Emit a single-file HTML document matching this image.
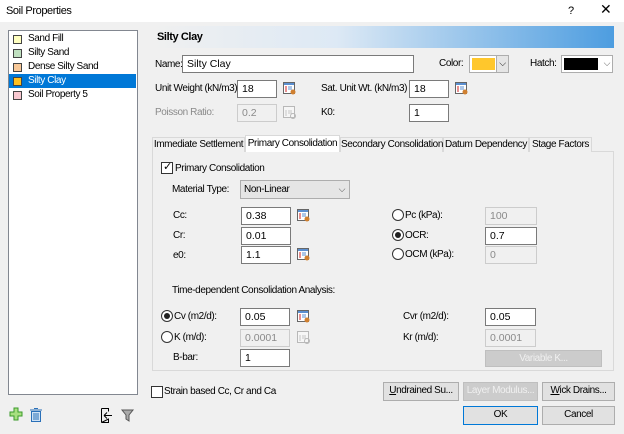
<!DOCTYPE html>
<html><head><style>
*{box-sizing:border-box;margin:0;padding:0}
body{width:624px;height:434px;background:#f0f0f0;font-family:"Liberation Sans",sans-serif;font-size:10px;letter-spacing:-0.4px;color:#000;position:relative;overflow:hidden}
.a{position:absolute;white-space:nowrap}
.t{position:absolute;white-space:nowrap;line-height:12px}
.in{position:absolute;background:#fff;border:1px solid #7a7a7a;padding:2px 4px;line-height:12px;font-size:10.5px;letter-spacing:0}
.dis{background:#f0f0f0;border-color:#ccc;color:#8a8a8a}
.g{color:#8a8a8a}
.btn{position:absolute;background:#e1e1e1;border:1px solid #adadad;text-align:center;line-height:16px;font-size:10px;white-space:nowrap;overflow:hidden}
.rad{position:absolute;width:12px;height:12px;border:1px solid #333;border-radius:50%;background:#fff}
.rad.on::after{content:"";position:absolute;left:2px;top:2px;width:6px;height:6px;border-radius:50%;background:#222}
.cb{position:absolute;width:12px;height:12px;border:1px solid #333;background:#fff}
.tab{position:absolute;top:137px;height:15px;border:1px solid #d9d9d9;border-bottom:none;background:#f0f0f0;line-height:13px;text-align:center;white-space:nowrap}
.li{position:absolute;left:9px;width:127px;height:14px;line-height:14px;padding-left:19px}
.sw{position:absolute;left:4px;top:3px;width:9px;height:9px;border:1px solid #444}
</style></head><body>
<div class="a" style="left:0;top:0;width:624px;height:22px;background:#fff"></div>
<div class="t" style="left:6px;top:5px;font-size:11px">Soil Properties</div>
<div class="t" style="left:568px;top:5px;font-size:11px">?</div>
<div class="t" style="left:600px;top:3px;font-size:14px">✕</div>

<div class="a" style="left:8px;top:30px;width:130px;height:365px;background:#fff;border:1px solid #828790"></div>
<div class="li" style="top:32px"><span class="sw" style="background:#ffffc0"></span>Sand Fill</div>
<div class="li" style="top:46px"><span class="sw" style="background:#c0e0c0"></span>Silty Sand</div>
<div class="li" style="top:60px"><span class="sw" style="background:#f8c898"></span>Dense Silty Sand</div>
<div class="li" style="top:74px;background:#0078d7;color:#fff"><span class="sw" style="background:#ffc020"></span>Silty Clay</div>
<div class="li" style="top:88px"><span class="sw" style="background:#f8c8d0"></span>Soil Property 5</div>

<div class="a" style="left:152px;top:26px;width:462px;height:22px;background:linear-gradient(90deg,#f0f0f0 0%,#dde9f5 40%,#4d9de0 100%)"></div>
<div class="t" style="left:157px;top:31px;font-weight:bold;font-size:11px">Silty Clay</div>

<div class="t" style="left:155px;top:59px">Name:</div>
<div class="in" style="left:182px;top:55px;width:232px;height:18px">Silty Clay</div>
<div class="t" style="left:439px;top:58px">Color:</div>
<div class="a" style="left:469px;top:55px;width:40px;height:18px;background:#fff;border:1px solid #adadad"><div style="position:absolute;left:2px;top:2px;width:23px;height:12px;background:#ffc72c"></div><div style="position:absolute;right:0;top:0;width:12px;height:16px;background:#e5e5e5;border-left:1px solid #adadad;font-size:9px;text-align:center;line-height:15px">⌵</div></div>
<div class="t" style="left:530px;top:58px">Hatch:</div>
<div class="a" style="left:561px;top:55px;width:52px;height:18px;background:#fff;border:1px solid #adadad"><div style="position:absolute;left:2px;top:2px;width:34px;height:12px;background:#000"></div><div style="position:absolute;right:2px;top:0;font-size:9px;line-height:15px;color:#555">⌵</div></div>

<div class="t" style="left:155px;top:83px">Unit Weight (kN/m3):</div>
<div class="in" style="left:237px;top:80px;width:40px;height:18px">18</div>
<div class="t" style="left:321px;top:83px">Sat. Unit Wt. (kN/m3)</div>
<div class="in" style="left:409px;top:80px;width:40px;height:18px">18</div>
<div class="t g" style="left:155px;top:107px">Poisson Ratio:</div>
<div class="in dis" style="left:237px;top:104px;width:40px;height:18px">0.2</div>
<div class="t" style="left:321px;top:107px">K0:</div>
<div class="in" style="left:409px;top:104px;width:40px;height:18px">1</div>

<div class="a" style="left:152px;top:151px;width:462px;height:220px;border:1px solid #d9d9d9;background:#f0f0f0"></div>
<div class="tab" style="left:152px;width:93px">Immediate Settlement</div>
<div class="tab" style="left:245px;width:95px;top:135px;height:17px;background:#fff;padding-top:1px">Primary Consolidation</div>
<div class="tab" style="left:340px;width:103px">Secondary Consolidation</div>
<div class="tab" style="left:443px;width:86px">Datum Dependency</div>
<div class="tab" style="left:529px;width:63px">Stage Factors</div>

<div class="cb" style="left:161px;top:162px"><span style="position:absolute;left:1px;top:-3px;font-size:11px">✓</span></div>
<div class="t" style="left:175px;top:163px">Primary Consolidation</div>
<div class="t" style="left:172px;top:184px">Material Type:</div>
<div class="a" style="left:240px;top:180px;width:110px;height:19px;background:#e5e5e5;border:1px solid #adadad;padding:3px 3px;line-height:12px">Non-Linear<span style="position:absolute;right:4px;top:0;font-size:9px;line-height:17px;color:#444">⌵</span></div>

<div class="t" style="left:173px;top:210px">Cc:</div>
<div class="in" style="left:241px;top:207px;width:50px;height:18px">0.38</div>
<div class="t" style="left:173px;top:230px">Cr:</div>
<div class="in" style="left:241px;top:227px;width:50px;height:18px">0.01</div>
<div class="t" style="left:173px;top:250px">e0:</div>
<div class="in" style="left:241px;top:246px;width:50px;height:18px">1.1</div>

<div class="rad" style="left:392px;top:209px"></div><div class="t" style="left:405px;top:210px">Pc (kPa):</div>
<div class="in dis" style="left:485px;top:207px;width:52px;height:18px">100</div>
<div class="rad on" style="left:392px;top:229px"></div><div class="t" style="left:405px;top:230px">OCR:</div>
<div class="in" style="left:485px;top:227px;width:52px;height:18px">0.7</div>
<div class="rad" style="left:392px;top:248px"></div><div class="t" style="left:405px;top:249px">OCM (kPa):</div>
<div class="in dis" style="left:485px;top:246px;width:52px;height:18px">0</div>

<div class="t" style="left:172px;top:285px">Time-dependent Consolidation Analysis:</div>
<div class="rad on" style="left:161px;top:310px"></div><div class="t" style="left:174px;top:311px">Cv (m2/d):</div>
<div class="in" style="left:240px;top:308px;width:50px;height:18px">0.05</div>
<div class="rad" style="left:161px;top:331px"></div><div class="t" style="left:174px;top:332px">K (m/d):</div>
<div class="in dis" style="left:240px;top:329px;width:50px;height:18px">0.0001</div>
<div class="t" style="left:173px;top:352px">B-bar:</div>
<div class="in" style="left:240px;top:349px;width:50px;height:18px">1</div>
<div class="t" style="left:403px;top:311px">Cvr (m2/d):</div>
<div class="in" style="left:485px;top:308px;width:51px;height:18px">0.05</div>
<div class="t" style="left:403px;top:332px">Kr (m/d):</div>
<div class="in dis" style="left:485px;top:329px;width:51px;height:18px">0.0001</div>
<div class="btn" style="left:485px;top:350px;width:117px;height:17px;background:#ccc;border-color:#bfbfbf;color:#f0f0f0">Variable K...</div>

<div class="cb" style="left:151px;top:386px"></div>
<div class="t" style="left:164px;top:386px">Strain based Cc, Cr and Ca</div>
<div class="btn" style="left:383px;top:382px;width:76px;height:19px"><u>U</u>ndrained Su...</div>
<div class="btn" style="left:463px;top:382px;width:75px;height:19px;background:#ccc;border-color:#bfbfbf;color:#f0f0f0">Layer Modulus...</div>
<div class="btn" style="left:542px;top:382px;width:73px;height:19px"><u>W</u>ick Drains...</div>
<div class="btn" style="left:463px;top:406px;width:75px;height:19px;border:1px solid #0078d7">OK</div>
<div class="btn" style="left:542px;top:406px;width:73px;height:19px">Cancel</div>

<svg class="a" style="left:0;top:0" width="624" height="434">
<g fill="none">
<g transform="translate(283,82)"><rect x="0.5" y="0.5" width="11" height="11" fill="#fff" stroke="#666"/><rect x="1" y="1" width="10" height="2" fill="#5b8fd0"/><path d="M2 5h2M2 7h2M2 9h2" stroke="#d02020"/><path d="M5 5h4M5 7h4" stroke="#5b8fd0"/><circle cx="10" cy="10" r="2.5" fill="#d08030"/></g>
<g transform="translate(455,82)"><rect x="0.5" y="0.5" width="11" height="11" fill="#fff" stroke="#666"/><rect x="1" y="1" width="10" height="2" fill="#5b8fd0"/><path d="M2 5h2M2 7h2M2 9h2" stroke="#d02020"/><path d="M5 5h4M5 7h4" stroke="#5b8fd0"/><circle cx="10" cy="10" r="2.5" fill="#d08030"/></g>
<g transform="translate(283,106)" opacity="0.4"><rect x="0.5" y="0.5" width="11" height="11" fill="#fff" stroke="#666"/><path d="M2 5h2M2 7h2M2 9h2M5 5h4M5 7h4" stroke="#888"/><circle cx="10" cy="10" r="2.5" stroke="#666"/></g>
<g transform="translate(297,209)"><rect x="0.5" y="0.5" width="11" height="11" fill="#fff" stroke="#666"/><rect x="1" y="1" width="10" height="2" fill="#5b8fd0"/><path d="M2 5h2M2 7h2M2 9h2" stroke="#d02020"/><path d="M5 5h4M5 7h4" stroke="#5b8fd0"/><circle cx="10" cy="10" r="2.5" fill="#d08030"/></g>
<g transform="translate(297,248)"><rect x="0.5" y="0.5" width="11" height="11" fill="#fff" stroke="#666"/><rect x="1" y="1" width="10" height="2" fill="#5b8fd0"/><path d="M2 5h2M2 7h2M2 9h2" stroke="#d02020"/><path d="M5 5h4M5 7h4" stroke="#5b8fd0"/><circle cx="10" cy="10" r="2.5" fill="#d08030"/></g>
<g transform="translate(297,310)"><rect x="0.5" y="0.5" width="11" height="11" fill="#fff" stroke="#666"/><rect x="1" y="1" width="10" height="2" fill="#5b8fd0"/><path d="M2 5h2M2 7h2M2 9h2" stroke="#d02020"/><path d="M5 5h4M5 7h4" stroke="#5b8fd0"/><circle cx="10" cy="10" r="2.5" fill="#d08030"/></g>
<g transform="translate(297,331)" opacity="0.4"><rect x="0.5" y="0.5" width="11" height="11" fill="#fff" stroke="#666"/><path d="M2 5h2M2 7h2M2 9h2M5 5h4M5 7h4" stroke="#888"/><circle cx="10" cy="10" r="2.5" stroke="#666"/></g>
</g>
<path d="M14 408h4v4h4v4h-4v4h-4v-4h-4v-4h4z" fill="#a8e080" stroke="#3a9a2a"/>
<g stroke="#2a70b8" fill="#cfe2f5"><rect x="31.5" y="411.5" width="9" height="10"/><path d="M30 410h12M34 408.5h4" fill="none"/><path d="M34 413v7M36 413v7M38 413v7" fill="none"/></g>
<path d="M101.5 408.5h7v3M108.5 419v3.5h-7z" fill="none" stroke="#000"/><path d="M101.5 408.5v14" stroke="#000"/><path d="M104 415.5h8M104 415.5l3-3M104 415.5l3 3" stroke="#000" fill="none"/>
<path d="M122 410h11l-4 5v6l-3-2v-4z" fill="#aaa" stroke="#555"/>
</svg>
</body></html>
